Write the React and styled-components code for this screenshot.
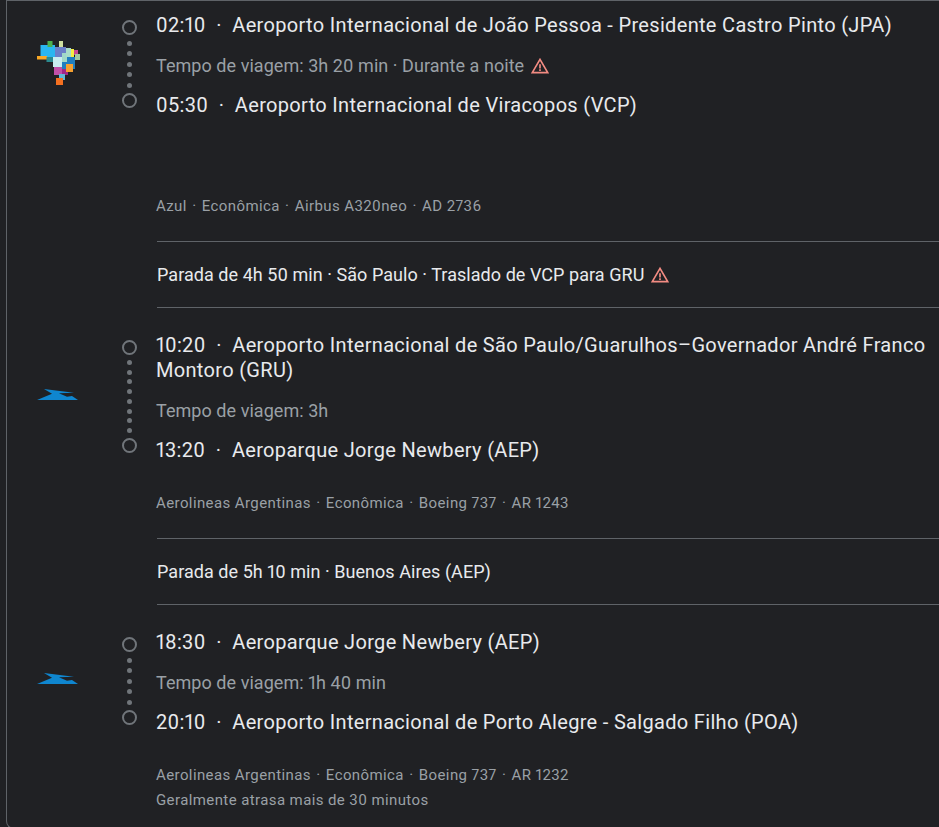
import React from 'react';
import styled, { createGlobalStyle } from 'styled-components';

const GlobalStyle = createGlobalStyle`
  html, body {
    margin: 0;
    padding: 0;
    background: #202124;
    overflow: hidden;
  }
`;

const BrazilLogo = () => {
  const tiles = [
    [40.5, 45, 14.5, 12, '#29b6f0'],
    [47.5, 41, 5, 6, '#4caf50'],
    [59, 41, 4, 7, '#d0e0a0'],
    [37, 56, 10, 3.5, '#f9a825'],
    [46.5, 57, 7, 5, '#2a8a8f'],
    [55, 47, 11, 10, '#6a7fc8'],
    [62, 62, 13, 7, '#1f7fc0'],
    [53, 57, 9, 10, '#c8eef0'],
    [62, 53, 5, 9, '#a0d8c8'],
    [66, 48, 5, 9, '#a8dcc8'],
    [71, 49, 3, 8, '#f5ee40'],
    [74, 50, 4, 5, '#c84a90'],
    [75, 54, 5, 6, '#a0c8a0'],
    [67, 57, 8, 5, '#1f7fc0'],
    [54, 67, 8, 8, '#c050a8'],
    [62, 69, 6, 6, '#a02888'],
    [66, 64, 7, 8, '#f5a030'],
    [59, 74, 6, 6, '#60b8d8'],
    [56, 78, 7, 7, '#f57020'],
  ];
  return (
    <LogoSvg width="44" height="46" viewBox="36 39 44 46">
      {tiles.map(([x, y, w, h, fill], i) => (
        <rect key={i} x={x} y={y} width={w} height={h} fill={fill} />
      ))}
    </LogoSvg>
  );
};

const AerolineasLogo = () => (
  <LogoSvg width="44" height="14" viewBox="0 0 44 14">
    <path d="M8 1 L38 4.7 L23 5.3 L31 8.7 L36 8 L42 12 L1 12 L16 5.8 Z" fill="#0f86cf" />
  </LogoSvg>
);

const WarningIcon = () => (
  <WarnSvg width="20" height="20" viewBox="0 0 24 24">
    <path d="M12 5.99 19.53 19H4.47L12 5.99M12 2 1 21h22L12 2z" fill="#f28b82" />
    <path d="M13 16h-2v2h2zM13 10h-2v5h2z" fill="#f28b82" />
  </WarnSvg>
);

const Leg = ({ logo, dots, departure, travel, arrival, meta, note, gap }) => (
  <LegWrapper>
    <Journey>
      <LogoColumn>{logo}</LogoColumn>
      <Timeline>
        <Ring />
        <Dots>
          {Array.from({ length: dots }).map((_, i) => <Dot key={i} />)}
        </Dots>
        <Ring />
      </Timeline>
      <Details>
        <Place>{departure}</Place>
        <Travel>{travel}</Travel>
        <Place>{arrival}</Place>
      </Details>
    </Journey>
    <Meta $gap={gap}>
      <div>
        {meta.map((part, i) => (
          <React.Fragment key={part}>
            {i > 0 && <Separator>·</Separator>}
            {part}
          </React.Fragment>
        ))}
      </div>
      {note && <div>{note}</div>}
    </Meta>
  </LegWrapper>
);

const App = () => (
  <Card>
    <GlobalStyle />
    <Leg
      logo={<BrazilLogo />}
      dots={5}
      departure="02:10  ·  Aeroporto Internacional de João Pessoa - Presidente Castro Pinto (JPA)"
      travel={<>Tempo de viagem: 3h 20 min · Durante a noite <WarningIcon /></>}
      arrival="05:30  ·  Aeroporto Internacional de Viracopos (VCP)"
      meta={['Azul', 'Econômica', 'Airbus A320neo', 'AD 2736']}
      gap={76}
    />
    <Layover>
      Parada de 4h 50 min · São Paulo · Traslado de VCP para GRU <WarningIcon />
    </Layover>
    <Leg
      logo={<AerolineasLogo />}
      dots={8}
      departure="10:20  ·  Aeroporto Internacional de São Paulo/Guarulhos–Governador André Franco Montoro (GRU)"
      travel="Tempo de viagem: 3h"
      arrival="13:20  ·  Aeroparque Jorge Newbery (AEP)"
      meta={['Aerolineas Argentinas', 'Econômica', 'Boeing 737', 'AR 1243']}
      gap={28}
    />
    <Layover>Parada de 5h 10 min · Buenos Aires (AEP)</Layover>
    <Leg
      logo={<AerolineasLogo />}
      dots={5}
      departure="18:30  ·  Aeroparque Jorge Newbery (AEP)"
      travel="Tempo de viagem: 1h 40 min"
      arrival="20:10  ·  Aeroporto Internacional de Porto Alegre - Salgado Filho (POA)"
      meta={['Aerolineas Argentinas', 'Econômica', 'Boeing 737', 'AR 1232']}
      note="Geralmente atrasa mais de 30 minutos"
      gap={28}
    />
  </Card>
);

const Card = styled.div`
  box-sizing: border-box;
  width: 939px;
  height: 829px;
  margin-left: 6px;
  border: 1px solid #5f6368;
  border-right: none;
  border-bottom-left-radius: 8px;
  background: #202124;
  font-family: Roboto, "Liberation Sans", sans-serif;
  font-variant-numeric: proportional-nums;
  overflow: hidden;
`;

const LegWrapper = styled.div`
  padding-top: 25px;

  &:nth-of-type(1) {
    padding-top: 12px;
  }
`;

const Journey = styled.div`
  display: flex;
  align-items: stretch;
`;

const LogoColumn = styled.div`
  width: 93px;
  flex-shrink: 0;
  padding-left: 30px;
  box-sizing: border-box;
  display: flex;
  align-items: center;
  margin-bottom: 7px;
`;

const LogoSvg = styled.svg`
  margin-left: -1px;
  filter: blur(0.4px);
`;

const Timeline = styled.div`
  width: 56px;
  flex-shrink: 0;
  box-sizing: border-box;
  padding: 7px 0 10px 22px;
  display: flex;
  flex-direction: column;
  align-items: flex-start;
`;

const Ring = styled.span`
  box-sizing: border-box;
  width: 15px;
  height: 15px;
  border: 2px solid #70757a;
  border-radius: 50%;
  flex-shrink: 0;
`;

const Dots = styled.div`
  flex: 1;
  width: 15px;
  display: flex;
  flex-direction: column;
  align-items: center;
  justify-content: space-evenly;
`;

const Dot = styled.span`
  width: 5px;
  height: 5px;
  border-radius: 50%;
  background: #70757a;
`;

const Details = styled.div`
  flex: 1;
  min-width: 0;
`;

const Place = styled.div`
  font-size: 20px;
  line-height: 25px;
  letter-spacing: 0.32px;
  color: #e8eaed;
  white-space: pre-wrap;
`;

const Travel = styled.div`
  font-size: 18px;
  line-height: 25px;
  letter-spacing: 0.05px;
  padding: 15px 0;
  color: #9aa0a6;
  display: flex;
  align-items: center;
  gap: 6px;
`;

const WarnSvg = styled.svg`
  flex-shrink: 0;
`;

const Meta = styled.div`
  margin: ${(p) => p.$gap}px 0 0 149px;
  font-size: 15px;
  line-height: 25px;
  color: #9aa0a6;
  letter-spacing: 0.4px;
  padding-bottom: 22px;
`;

const Separator = styled.span`
  margin: 0 5.3px;
`;

const Layover = styled.div`
  margin-left: 150px;
  height: 67px;
  box-sizing: border-box;
  border-top: 1px solid #5f6368;
  border-bottom: 1px solid #5f6368;
  display: flex;
  align-items: center;
  gap: 6px;
  font-size: 18px;
  letter-spacing: 0.05px;
  color: #e8eaed;
`;

export default App;
